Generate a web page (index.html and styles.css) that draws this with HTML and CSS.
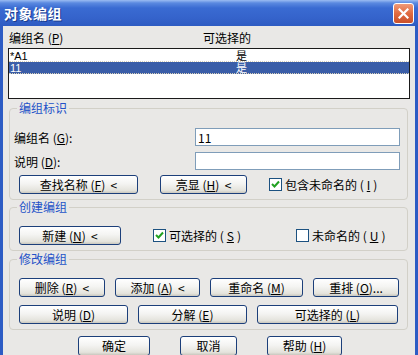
FILE: index.html
```html
<!DOCTYPE html>
<html>
<head>
	<title>对象编组</title>
	<meta charset="utf-8">
	<link rel="stylesheet" href="styles.css">
</head>
<body>
	<div class="window">
		<div class="titlebar">
			<span class="title">对象编组</span>
			<span class="close">
				<svg width="11" height="11" viewBox="0 0 11 11"><path d="M1.5 1.5 L9.5 9.5 M9.5 1.5 L1.5 9.5" stroke="#fff" stroke-width="2.2" stroke-linecap="square"/></svg>
			</span>
		</div>
		<div class="client">
			<div class="list-head">
				<span class="col-name">编组名 (<u>P</u>)</span>
				<span class="col-sel">可选择的</span>
			</div>
			<div class="list">
				<div class="row"><span class="cell-name">*A1</span><span class="cell-sel">是</span></div>
				<div class="row selected"><span class="cell-name">11</span><span class="cell-sel">是</span></div>
			</div>

			<fieldset class="group g-ident">
				<legend>编组标识</legend>
				<div class="field-row">
					<label>编组名 (<u>G</u>):</label>
					<input class="text" type="text" value="11">
				</div>
				<div class="field-row">
					<label>说明 (<u>D</u>):</label>
					<input class="text" type="text" value="">
				</div>
				<div class="btn-row">
					<button class="btn w-find">查找名称 (<u>F</u>)&nbsp; &lt;</button>
					<button class="btn w-hl">亮显 (<u>H</u>)&nbsp; &lt;</button>
					<label class="check c-unnamed"><span class="box on"></span>包含未命名的 (<u>I</u>)</label>
				</div>
			</fieldset>

			<fieldset class="group g-create">
				<legend>创建编组</legend>
				<div class="btn-row">
					<button class="btn w-new">新建 (<u>N</u>)&nbsp; &lt;</button>
					<label class="check c-sel"><span class="box on"></span>可选择的 (<u>S</u>)</label>
					<label class="check c-un"><span class="box"></span>未命名的 (<u>U</u>)</label>
				</div>
			</fieldset>

			<fieldset class="group g-modify">
				<legend>修改编组</legend>
				<div class="btn-row">
					<button class="btn w-del">删除 (<u>R</u>)&nbsp; &lt;</button>
					<button class="btn w-add">添加 (<u>A</u>)&nbsp; &lt;</button>
					<button class="btn w-ren">重命名 (<u>M</u>)</button>
					<button class="btn w-ord">重排 (<u>O</u>)...</button>
				</div>
				<div class="btn-row second">
					<button class="btn w-desc">说明 (<u>D</u>)</button>
					<button class="btn w-exp">分解 (<u>E</u>)</button>
					<button class="btn w-selb">可选择的 (<u>L</u>)</button>
				</div>
			</fieldset>

			<div class="dialog-btns">
				<button class="btn w-ok">确定</button>
				<button class="btn w-cancel">取消</button>
				<button class="btn w-help">帮助 (<u>H</u>)</button>
			</div>
		</div>
	</div>
</body>
</html>
```

FILE: styles.css
```css
body{
	margin: 0;
	font-family: "Noto Sans CJK SC", sans-serif;
	font-size: 12px;
	color: #000;
}

.window{
	width: 418px;
	height: 355px;
	overflow: hidden;
	display: flex;
	flex-direction: column;
	background: #2d5cc4;
}

.titlebar{
	height: 26px;
	flex: none;
	display: flex;
	align-items: center;
	justify-content: space-between;
	padding: 0 4px 0 4px;
	background: linear-gradient(#9bbcf2 0, #5a89e0 3px, #3a6bd2 8px, #3563cb 18px, #2d5bc2 26px);
}

.title{
	color: #fff;
	font-weight: bold;
	font-size: 14px;
	letter-spacing: 0.5px;
	text-shadow: 1px 1px 0 #1a3c8c;
}

.close{
	width: 19px;
	height: 19px;
	margin-top: 1px;
	border: 1px solid #fff;
	border-radius: 3px;
	background: linear-gradient(#f09a78, #e06a40 50%, #c9502a);
	display: flex;
	align-items: center;
	justify-content: center;
}

.client{
	flex: 1;
	margin: 0 3px;
	background: #e9e8e6;
	padding: 0 0 0 5px;
}

.list-head{
	height: 21px;
	display: flex;
	align-items: center;
	padding-top: 1px;
}
.col-name{
	width: 194px;
	padding-left: 1px;
}

.list{
	width: 400px;
	height: 48px;
	border: 1px solid #1a1a1a;
	background: #fff;
	padding-top: 1px;
}
.row{
	height: 12px;
	line-height: 12px;
	font-family: "Liberation Sans", "Noto Sans CJK SC", sans-serif;
	font-size: 11px;
	box-sizing: border-box;
	display: flex;
	border-bottom: 1px dotted #d8d0b8;
}
.row.selected{
	background: #3b5ea8;
	color: #fff;
}
.cell-name{
	width: 226px;
	padding-left: 1px;
}

.group{
	margin: 2px 0 0 1px;
	width: 399px;
	box-sizing: border-box;
	border: 1px solid #d2d0c8;
	border-radius: 4px;
	padding: 13px 0 5px 4px;
}
.group legend{
	color: #2452c8;
	padding: 0 2px;
	margin-left: 3px;
	line-height: 14px;
}
.g-create{
	margin-top: 0;
	padding-top: 12px;
}
.g-modify{
	margin-top: 1px;
	padding-top: 12px;
}

.field-row{
	display: flex;
	align-items: center;
	height: 18px;
	margin-bottom: 6px;
}
.field-row label{
	width: 181px;
}
.text{
	width: 205px;
	height: 18px;
	box-sizing: border-box;
	border: 1px solid #7f9db9;
	padding: 0 2px;
	font-family: inherit;
	font-size: 12px;
	outline: none;
}

.btn-row{
	display: flex;
	align-items: center;
	padding-left: 5px;
	gap: 10px;
}
.btn-row.second{
	margin-top: 8px;
}
.g-ident .btn-row{
	margin-top: -1px;
}

.btn{
	height: 19px;
	box-sizing: border-box;
	border: 1px solid #1c3f7a;
	border-radius: 3px;
	background: linear-gradient(#ffffff, #f4f4f2 45%, #e4e3dc 85%, #c9c7be);
	font-family: inherit;
	font-size: 12px;
	color: #000;
	padding: 0;
	line-height: 16px;
}

.w-find{ width: 119px; }
.w-hl{ width: 87px; margin-left: 12px; }
.w-new{ width: 102px; }
.w-del{ width: 86px; }
.w-add{ width: 85px; }
.w-ren{ width: 93px; }
.w-ord{ width: 86px; }
.w-desc{ width: 109px; }
.w-exp{ width: 109px; }
.w-selb{ width: 141px; }

.check{
	display: flex;
	align-items: center;
	gap: 3px;
}
.c-unnamed{ margin-left: 12px; }
.c-sel{ margin-left: 22px; }
.c-un{ margin-left: 45px; }

.box{
	width: 11px;
	height: 11px;
	border: 1px solid #1c5180;
	background: #fff;
	display: inline-block;
}
.box.on{
	background: #fff url("data:image/svg+xml;utf8,<svg xmlns='http://www.w3.org/2000/svg' width='11' height='11'><path d='M2 5 L4.5 7.5 L9 2.5' stroke='%2321a121' stroke-width='2' fill='none'/></svg>") no-repeat center;
}

.dialog-btns{
	display: flex;
	gap: 30px;
	padding-left: 70px;
	margin-top: 6px;
}
.w-ok{ width: 72px; height: 20px; }
.w-cancel{ width: 57px; height: 20px; }
.w-help{ width: 75px; height: 20px; }
```
